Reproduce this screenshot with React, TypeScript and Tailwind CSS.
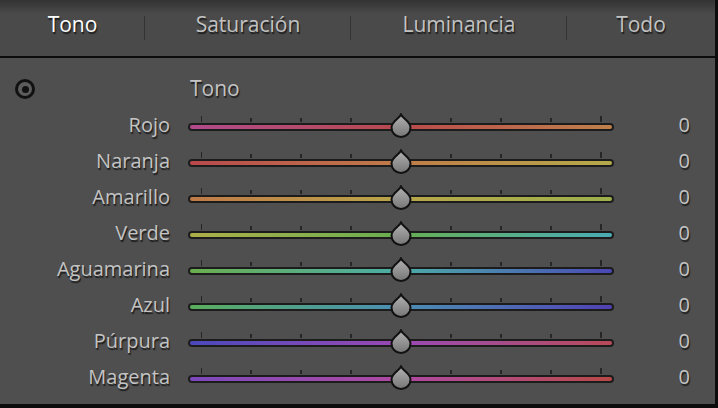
const tabs = [
  { label: "Tono", w: "w-[145px]", active: true },
  { label: "Saturación", w: "w-[206px]" },
  { label: "Luminancia", w: "w-[216px]" },
  { label: "Todo", w: "flex-1" },
];

const rows = [
  { label: "Rojo", track: "from-[#b04a8c] via-[#b84a4c] to-[#c0804a]" },
  { label: "Naranja", track: "from-[#b8484c] via-[#c07c48] to-[#b4aa4a]" },
  { label: "Amarillo", track: "from-[#c07a46] via-[#b8a64a] to-[#9cb04c]" },
  { label: "Verde", track: "from-[#acae48] via-[#66ae50] to-[#4aacb4]" },
  { label: "Aguamarina", track: "from-[#6aae4c] via-[#4aaca6] to-[#4a46b4]" },
  { label: "Azul", track: "from-[#5aae5c] via-[#4a8eb2] to-[#5040b4]" },
  { label: "Púrpura", track: "from-[#4a48bc] via-[#9a48b4] to-[#b84a58]" },
  { label: "Magenta", track: "from-[#7c48bc] via-[#b048a2] to-[#b84846]" },
];

const shadow = "[text-shadow:1px_1.5px_1px_#1c1c1c]";

function Thumb() {
  return (
    <svg width="24" height="25" viewBox="0 0 24 25" className="absolute left-[213px] top-[-10px] -translate-x-1/2">
      <defs>
        <linearGradient id="th" x1="0" y1="0" x2="0" y2="1">
          <stop offset="0" stopColor="#b2b2b2" />
          <stop offset="1" stopColor="#767676" />
        </linearGradient>
      </defs>
      <path d="M12 1.5 C14 6 21.5 8.5 21.5 14.5 A9.5 9.5 0 0 1 2.5 14.5 C2.5 8.5 10 6 12 1.5 Z" fill="url(#th)" stroke="#111" strokeWidth="2" />
    </svg>
  );
}

function Slider({ track }: { track: string }) {
  const ticks = [0, 1, 2, 3, 4, 5, 6, 7, 8];
  return (
    <div className="relative w-[426px] h-[36px] flex flex-col justify-center">
      <div className="absolute left-[12.5px] right-[12.5px] top-[8px] flex justify-between items-end h-[6px]">
        {ticks.map((t) => (
          <div key={t} className={`w-[1.5px] bg-[#262626] ${t === 0 || t === 8 ? "h-[6px]" : "h-[4px]"}`} />
        ))}
      </div>
      <div className="relative h-[8px] rounded-full bg-[#1c1c1c] p-[2px] mt-[1px]">
        <div className={`h-full rounded-full bg-linear-to-r ${track}`} />
        <Thumb />
      </div>
    </div>
  );
}

export default function App() {
  return (
    <div className="w-[718px] h-[408px] flex flex-col bg-[#4f4f4f] border-r-[3px] border-b-[4px] border-[#0c0c0c] font-['Open_Sans',sans-serif] overflow-hidden">
      <div className="h-[58px] flex bg-linear-to-b from-[#333333] via-[#4a4a4a] via-25% to-[#4a4a4a] border-b-2 border-[#0c0c0c]">
        {tabs.map((t, i) => (
          <div key={t.label} className={`${t.w} flex items-center relative`}>
            <span className={`w-full text-center text-[21px] pb-[6px] ${shadow} ${t.active ? "text-white" : "text-[#c2c2c2]"}`}>
              {t.label}
            </span>
            {i < 3 && <div className="absolute right-0 top-[16px] h-[24px] w-[1.5px] bg-[#333]" />}
          </div>
        ))}
      </div>
      <div className="flex flex-col pt-[12px]">
        <div className="h-[38px] flex items-center">
          <div className="w-[190px] pl-[15px] flex items-center">
            <div className="w-[20px] h-[20px] shrink-0 rounded-full border-[3px] border-[#111] bg-[#5c5c5c] flex items-center justify-center">
              <div className="w-[7px] h-[7px] rounded-full bg-[#111]" />
            </div>
          </div>
          <span className={`text-[21px] text-[#c4c4c4] ${shadow}`}>Tono</span>
        </div>
        {rows.map((r) => (
          <div key={r.label} className="h-[36px] flex items-center">
            <span className={`w-[170px] text-right text-[20px] text-[#c4c4c4] pb-[3px] ${shadow}`}>{r.label}</span>
            <div className="ml-[18px]">
              <Slider track={r.track} />
            </div>
            <span className={`w-[76px] text-right text-[20px] text-[#c4c4c4] pb-[3px] ${shadow}`}>0</span>
          </div>
        ))}
      </div>
    </div>
  );
}
